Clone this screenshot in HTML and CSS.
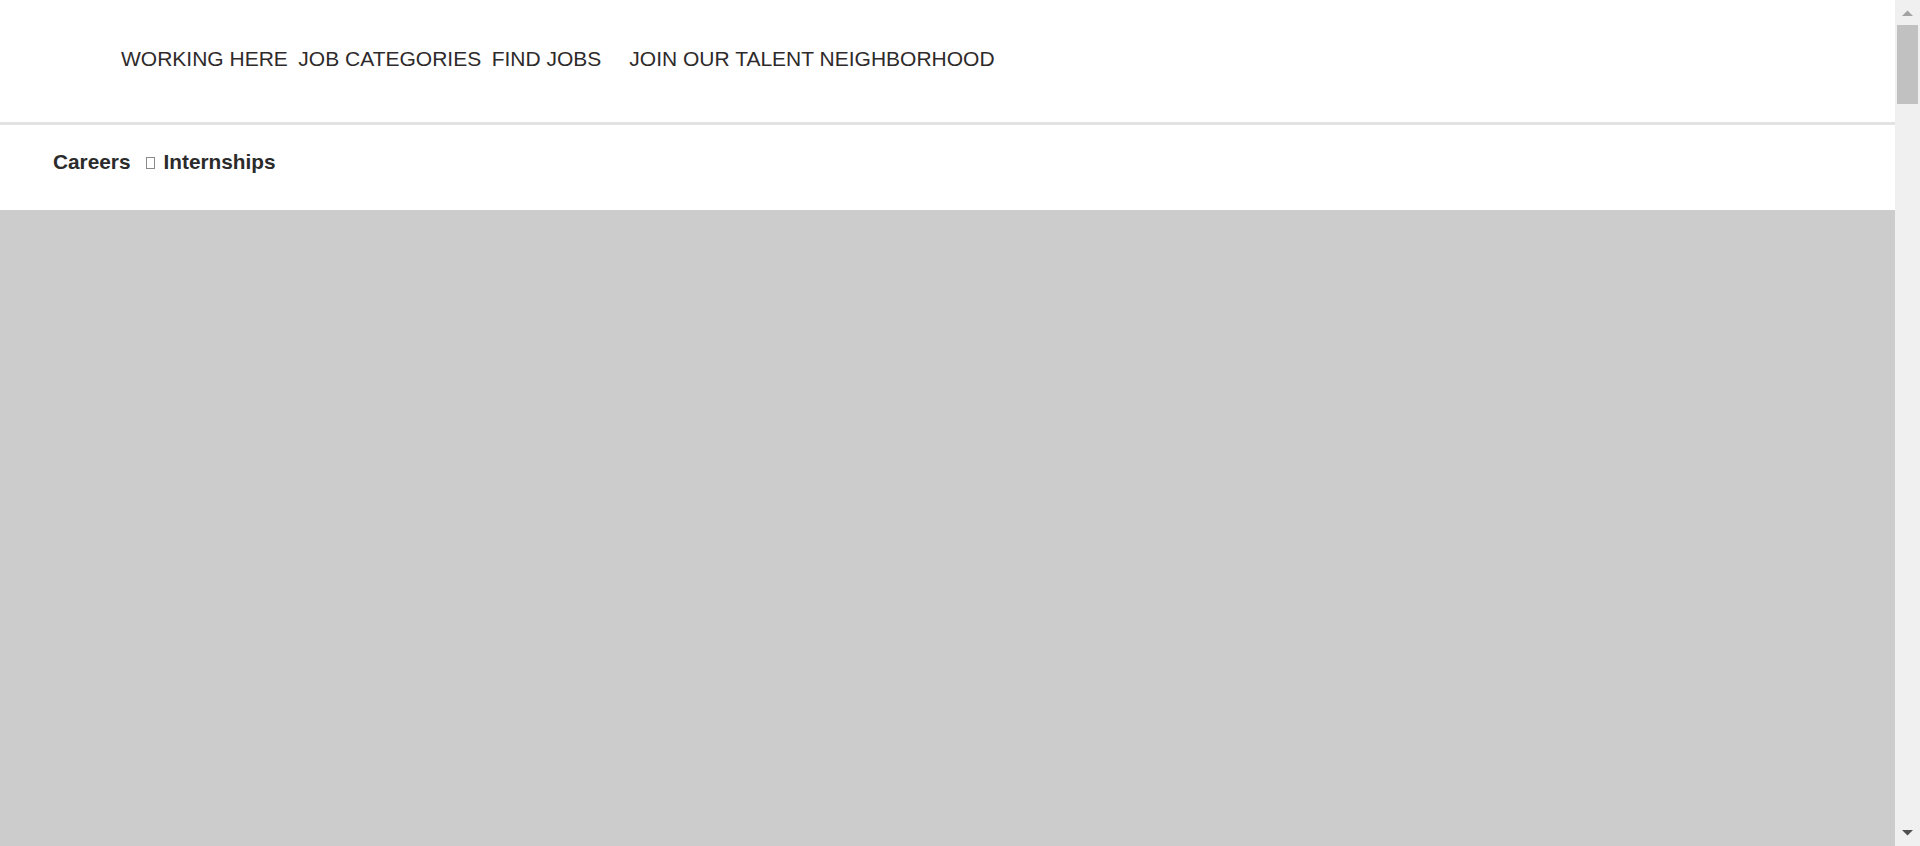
FILE: index.html
```html
<!DOCTYPE html>
<html lang="en">
<head>
<meta charset="utf-8">
<title>Internships | Careers</title>
<link rel="stylesheet" href="styles.css">
</head>
<body>
<div class="window">
  <div class="page">
    <header class="site-header">
      <nav class="main-nav">
        <a class="nav-link" href="#">WORKING HERE</a>
        <a class="nav-link" href="#">JOB CATEGORIES</a>
        <a class="nav-link" href="#">FIND JOBS</a>
        <a class="nav-link nav-link--cta" href="#">JOIN OUR TALENT NEIGHBORHOOD</a>
      </nav>
    </header>
    <div class="breadcrumb">
      <a class="crumb" href="#">Careers</a>
      <span class="crumb-sep" aria-hidden="true"></span>
      <span class="crumb current">Internships</span>
    </div>
    <main class="hero"></main>
  </div>
  <div class="scrollbar" aria-hidden="true">
    <div class="sb-button">
      <svg width="25" height="25" viewBox="0 0 25 25"><polygon points="7,16 12.5,10.5 18,16" fill="#a3a3a3"/></svg>
    </div>
    <div class="sb-track">
      <div class="sb-thumb"></div>
    </div>
    <div class="sb-button">
      <svg width="25" height="25" viewBox="0 0 25 25"><polygon points="7,9 18,9 12.5,14.5" fill="#505050"/></svg>
    </div>
  </div>
</div>
</body>
</html>
```

FILE: styles.css
```css
html, body {
  margin: 0;
  padding: 0;
  height: 100%;
  overflow: hidden;
  background: #ffffff;
  font-family: "Liberation Sans", Arial, sans-serif;
  color: #333333;
}

.window {
  display: flex;
  height: 100vh;
}

.page {
  flex: 1;
  display: flex;
  flex-direction: column;
  min-width: 0;
}

.site-header {
  box-sizing: border-box;
  height: 125px;
  flex: none;
  padding: 47px 0 0 121px;
  border-bottom: 3px solid #e3e3e3;
}

.main-nav {
  display: flex;
  align-items: baseline;
  gap: 10.5px;
}

.nav-link {
  font-size: 21px;
  line-height: 24px;
  color: #2e2a2a;
  text-decoration: none;
  white-space: nowrap;
}

.nav-link--cta {
  margin-left: 17.5px;
}

.breadcrumb {
  box-sizing: border-box;
  height: 85px;
  flex: none;
  padding: 25px 0 0 53px;
  display: flex;
  align-items: baseline;
}

.crumb {
  font-size: 20.8px;
  line-height: 24px;
  font-weight: bold;
  color: #2b2b2b;
  text-decoration: none;
}

.crumb-sep {
  display: inline-block;
  box-sizing: border-box;
  width: 9px;
  height: 12px;
  border: 1px solid #8a8a8a;
  margin: 0 8px 0 16px;
}

.hero {
  display: block;
  flex: 1;
  background: #cccccc;
}

.scrollbar {
  flex: none;
  width: 25px;
  display: flex;
  flex-direction: column;
  background: #f0f0f0;
}

.sb-button {
  height: 25px;
  flex: none;
}

.sb-button svg {
  display: block;
}

.sb-track {
  flex: 1;
}

.sb-thumb {
  height: 79px;
  margin: 0 2px;
  background: #c1c1c1;
}
```
